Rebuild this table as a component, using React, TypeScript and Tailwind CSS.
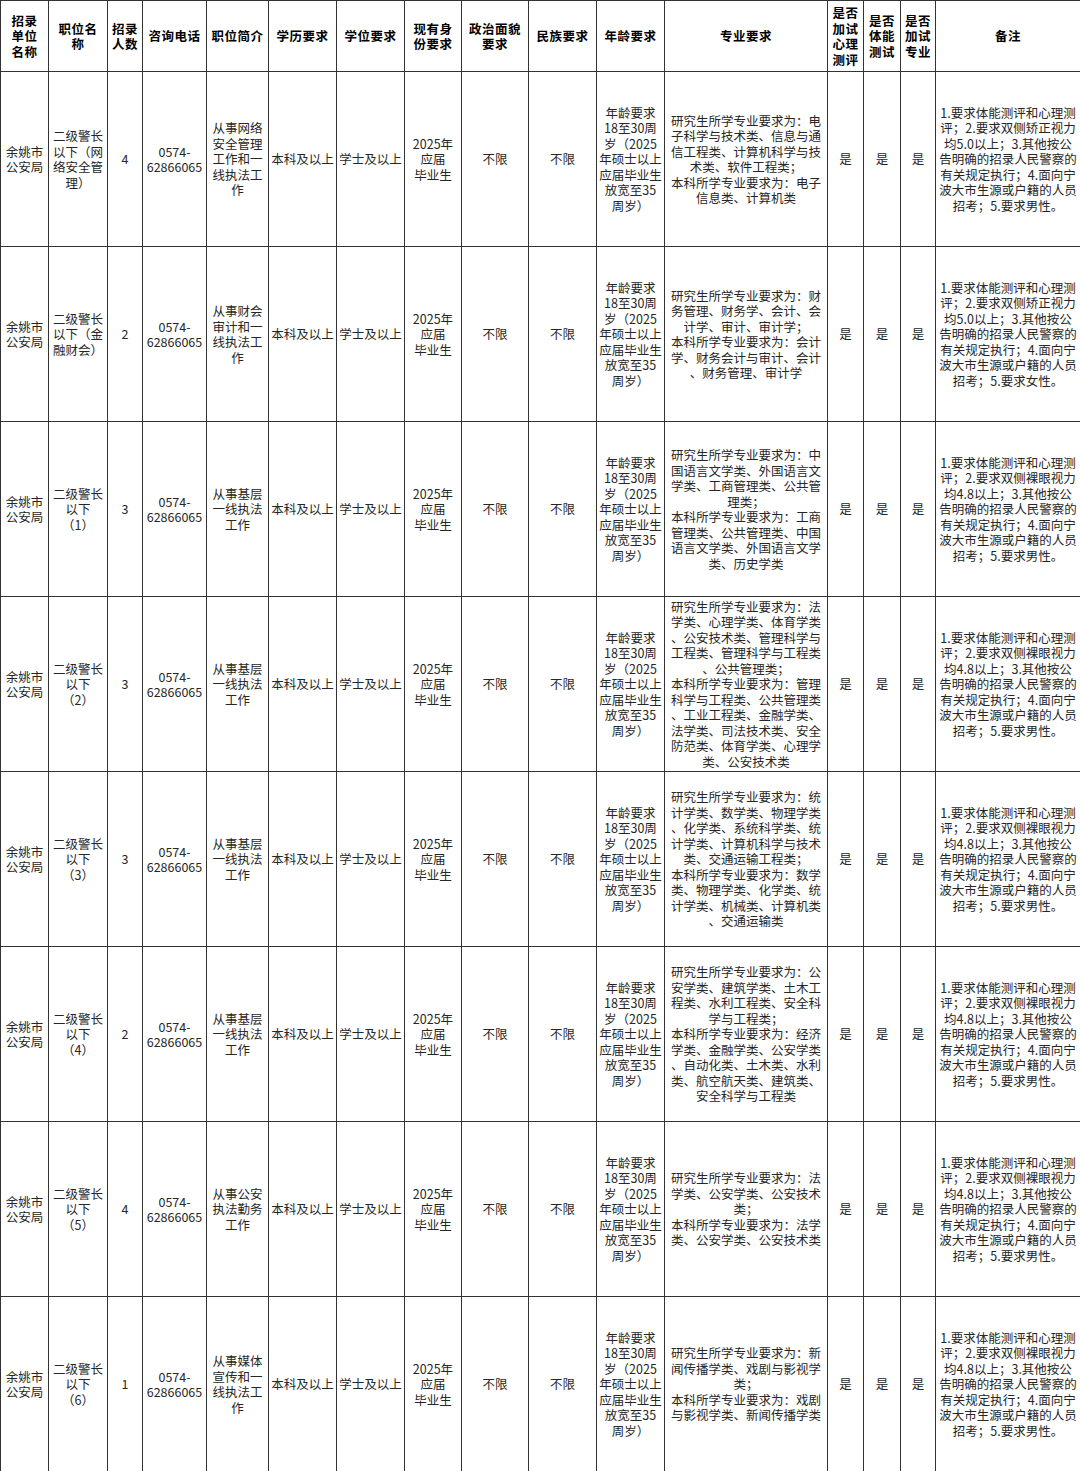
import React from 'react';

const headers = [
  '招录\n单位\n名称',
  '职位名\n称',
  '招录\n人数',
  '咨询电话',
  '职位简介',
  '学历要求',
  '学位要求',
  '现有身\n份要求',
  '政治面貌\n要求',
  '民族要求',
  '年龄要求',
  '专业要求',
  '是否\n加试\n心理\n测评',
  '是否\n体能\n测试',
  '是否\n加试\n专业',
  '备注',
];

const colWidths = [48, 59, 35, 64, 62, 68, 68, 57, 67, 68, 68, 163, 36, 37, 35, 145];

const age = '年龄要求\n18至30周\n岁（2025\n年硕士以上\n应届毕业生\n放宽至35\n周岁）';

const note = (vision: string, sex: string) =>
  `1.要求体能测评和心理测\n评；2.要求双侧${vision}视力\n均${vision === '矫正' ? '5.0' : '4.8'}以上；3.其他按公\n告明确的招录人民警察的\n有关规定执行；4.面向宁\n波大市生源或户籍的人员\n招考；5.要求${sex}。`;

interface Row {
  title: string;
  count: string;
  intro: string;
  major: string;
  note: string;
}

const rows: Row[] = [
  {
    title: '二级警长\n以下（网\n络安全管\n理）',
    count: '4',
    intro: '从事网络\n安全管理\n工作和一\n线执法工\n作',
    major:
      '研究生所学专业要求为：电\n子科学与技术类、信息与通\n信工程类、计算机科学与技\n术类、软件工程类；\n本科所学专业要求为：电子\n信息类、计算机类',
    note: note('矫正', '男性'),
  },
  {
    title: '二级警长\n以下（金\n融财会）',
    count: '2',
    intro: '从事财会\n审计和一\n线执法工\n作',
    major:
      '研究生所学专业要求为：财\n务管理、财务学、会计、会\n计学、审计、审计学；\n本科所学专业要求为：会计\n学、财务会计与审计、会计\n、财务管理、审计学',
    note: note('矫正', '女性'),
  },
  {
    title: '二级警长\n以下\n（1）',
    count: '3',
    intro: '从事基层\n一线执法\n工作',
    major:
      '研究生所学专业要求为：中\n国语言文学类、外国语言文\n学类、工商管理类、公共管\n理类；\n本科所学专业要求为：工商\n管理类、公共管理类、中国\n语言文学类、外国语言文学\n类、历史学类',
    note: note('裸眼', '男性'),
  },
  {
    title: '二级警长\n以下\n（2）',
    count: '3',
    intro: '从事基层\n一线执法\n工作',
    major:
      '研究生所学专业要求为：法\n学类、心理学类、体育学类\n、公安技术类、管理科学与\n工程类、管理科学与工程类\n、公共管理类；\n本科所学专业要求为：管理\n科学与工程类、公共管理类\n、工业工程类、金融学类、\n法学类、司法技术类、安全\n防范类、体育学类、心理学\n类、公安技术类',
    note: note('裸眼', '男性'),
  },
  {
    title: '二级警长\n以下\n（3）',
    count: '3',
    intro: '从事基层\n一线执法\n工作',
    major:
      '研究生所学专业要求为：统\n计学类、数学类、物理学类\n、化学类、系统科学类、统\n计学类、计算机科学与技术\n类、交通运输工程类；\n本科所学专业要求为：数学\n类、物理学类、化学类、统\n计学类、机械类、计算机类\n、交通运输类',
    note: note('裸眼', '男性'),
  },
  {
    title: '二级警长\n以下\n（4）',
    count: '2',
    intro: '从事基层\n一线执法\n工作',
    major:
      '研究生所学专业要求为：公\n安学类、建筑学类、土木工\n程类、水利工程类、安全科\n学与工程类；\n本科所学专业要求为：经济\n学类、金融学类、公安学类\n、自动化类、土木类、水利\n类、航空航天类、建筑类、\n安全科学与工程类',
    note: note('裸眼', '男性'),
  },
  {
    title: '二级警长\n以下\n（5）',
    count: '4',
    intro: '从事公安\n执法勤务\n工作',
    major:
      '研究生所学专业要求为：法\n学类、公安学类、公安技术\n类；\n本科所学专业要求为：法学\n类、公安学类、公安技术类',
    note: note('裸眼', '男性'),
  },
  {
    title: '二级警长\n以下\n（6）',
    count: '1',
    intro: '从事媒体\n宣传和一\n线执法工\n作',
    major:
      '研究生所学专业要求为：新\n闻传播学类、戏剧与影视学\n类；\n本科所学专业要求为：戏剧\n与影视学类、新闻传播学类',
    note: note('裸眼', '男性'),
  },
];

const cell =
  'border-[1.5px] border-[#333] p-0 text-center align-middle whitespace-pre overflow-hidden';

export default function App() {
  return (
    <div
      className="w-[1080px] h-[1471px] bg-white text-[#262626] overflow-hidden"
      style={{ fontFamily: '"Noto Sans CJK SC", "Noto Sans", sans-serif' }}
    >
      <table className="w-[1080px] table-fixed border-collapse text-[12.5px] leading-[15.5px]">
        <colgroup>
          {colWidths.map((w, i) => (
            <col key={i} style={{ width: w }} />
          ))}
        </colgroup>
        <thead>
          <tr className="h-[71px]">
            {headers.map((h, i) => (
              <th key={i} className={`${cell} font-bold text-black tracking-[0.5px]`}>
                {h}
              </th>
            ))}
          </tr>
        </thead>
        <tbody>
          {rows.map((r, i) => (
            <tr key={i} className="h-[175px]">
              <td className={cell}>{'余姚市\n公安局'}</td>
              <td className={cell}>{r.title}</td>
              <td className={cell}>{r.count}</td>
              <td className={cell}>{'0574-\n62866065'}</td>
              <td className={cell}>{r.intro}</td>
              <td className={cell}>本科及以上</td>
              <td className={cell}>学士及以上</td>
              <td className={cell}>{'2025年\n应届\n毕业生'}</td>
              <td className={cell}>不限</td>
              <td className={cell}>不限</td>
              <td className={cell}>{age}</td>
              <td className={cell}>{r.major}</td>
              <td className={cell}>是</td>
              <td className={cell}>是</td>
              <td className={cell}>是</td>
              <td className={cell}>{r.note}</td>
            </tr>
          ))}
        </tbody>
      </table>
    </div>
  );
}
